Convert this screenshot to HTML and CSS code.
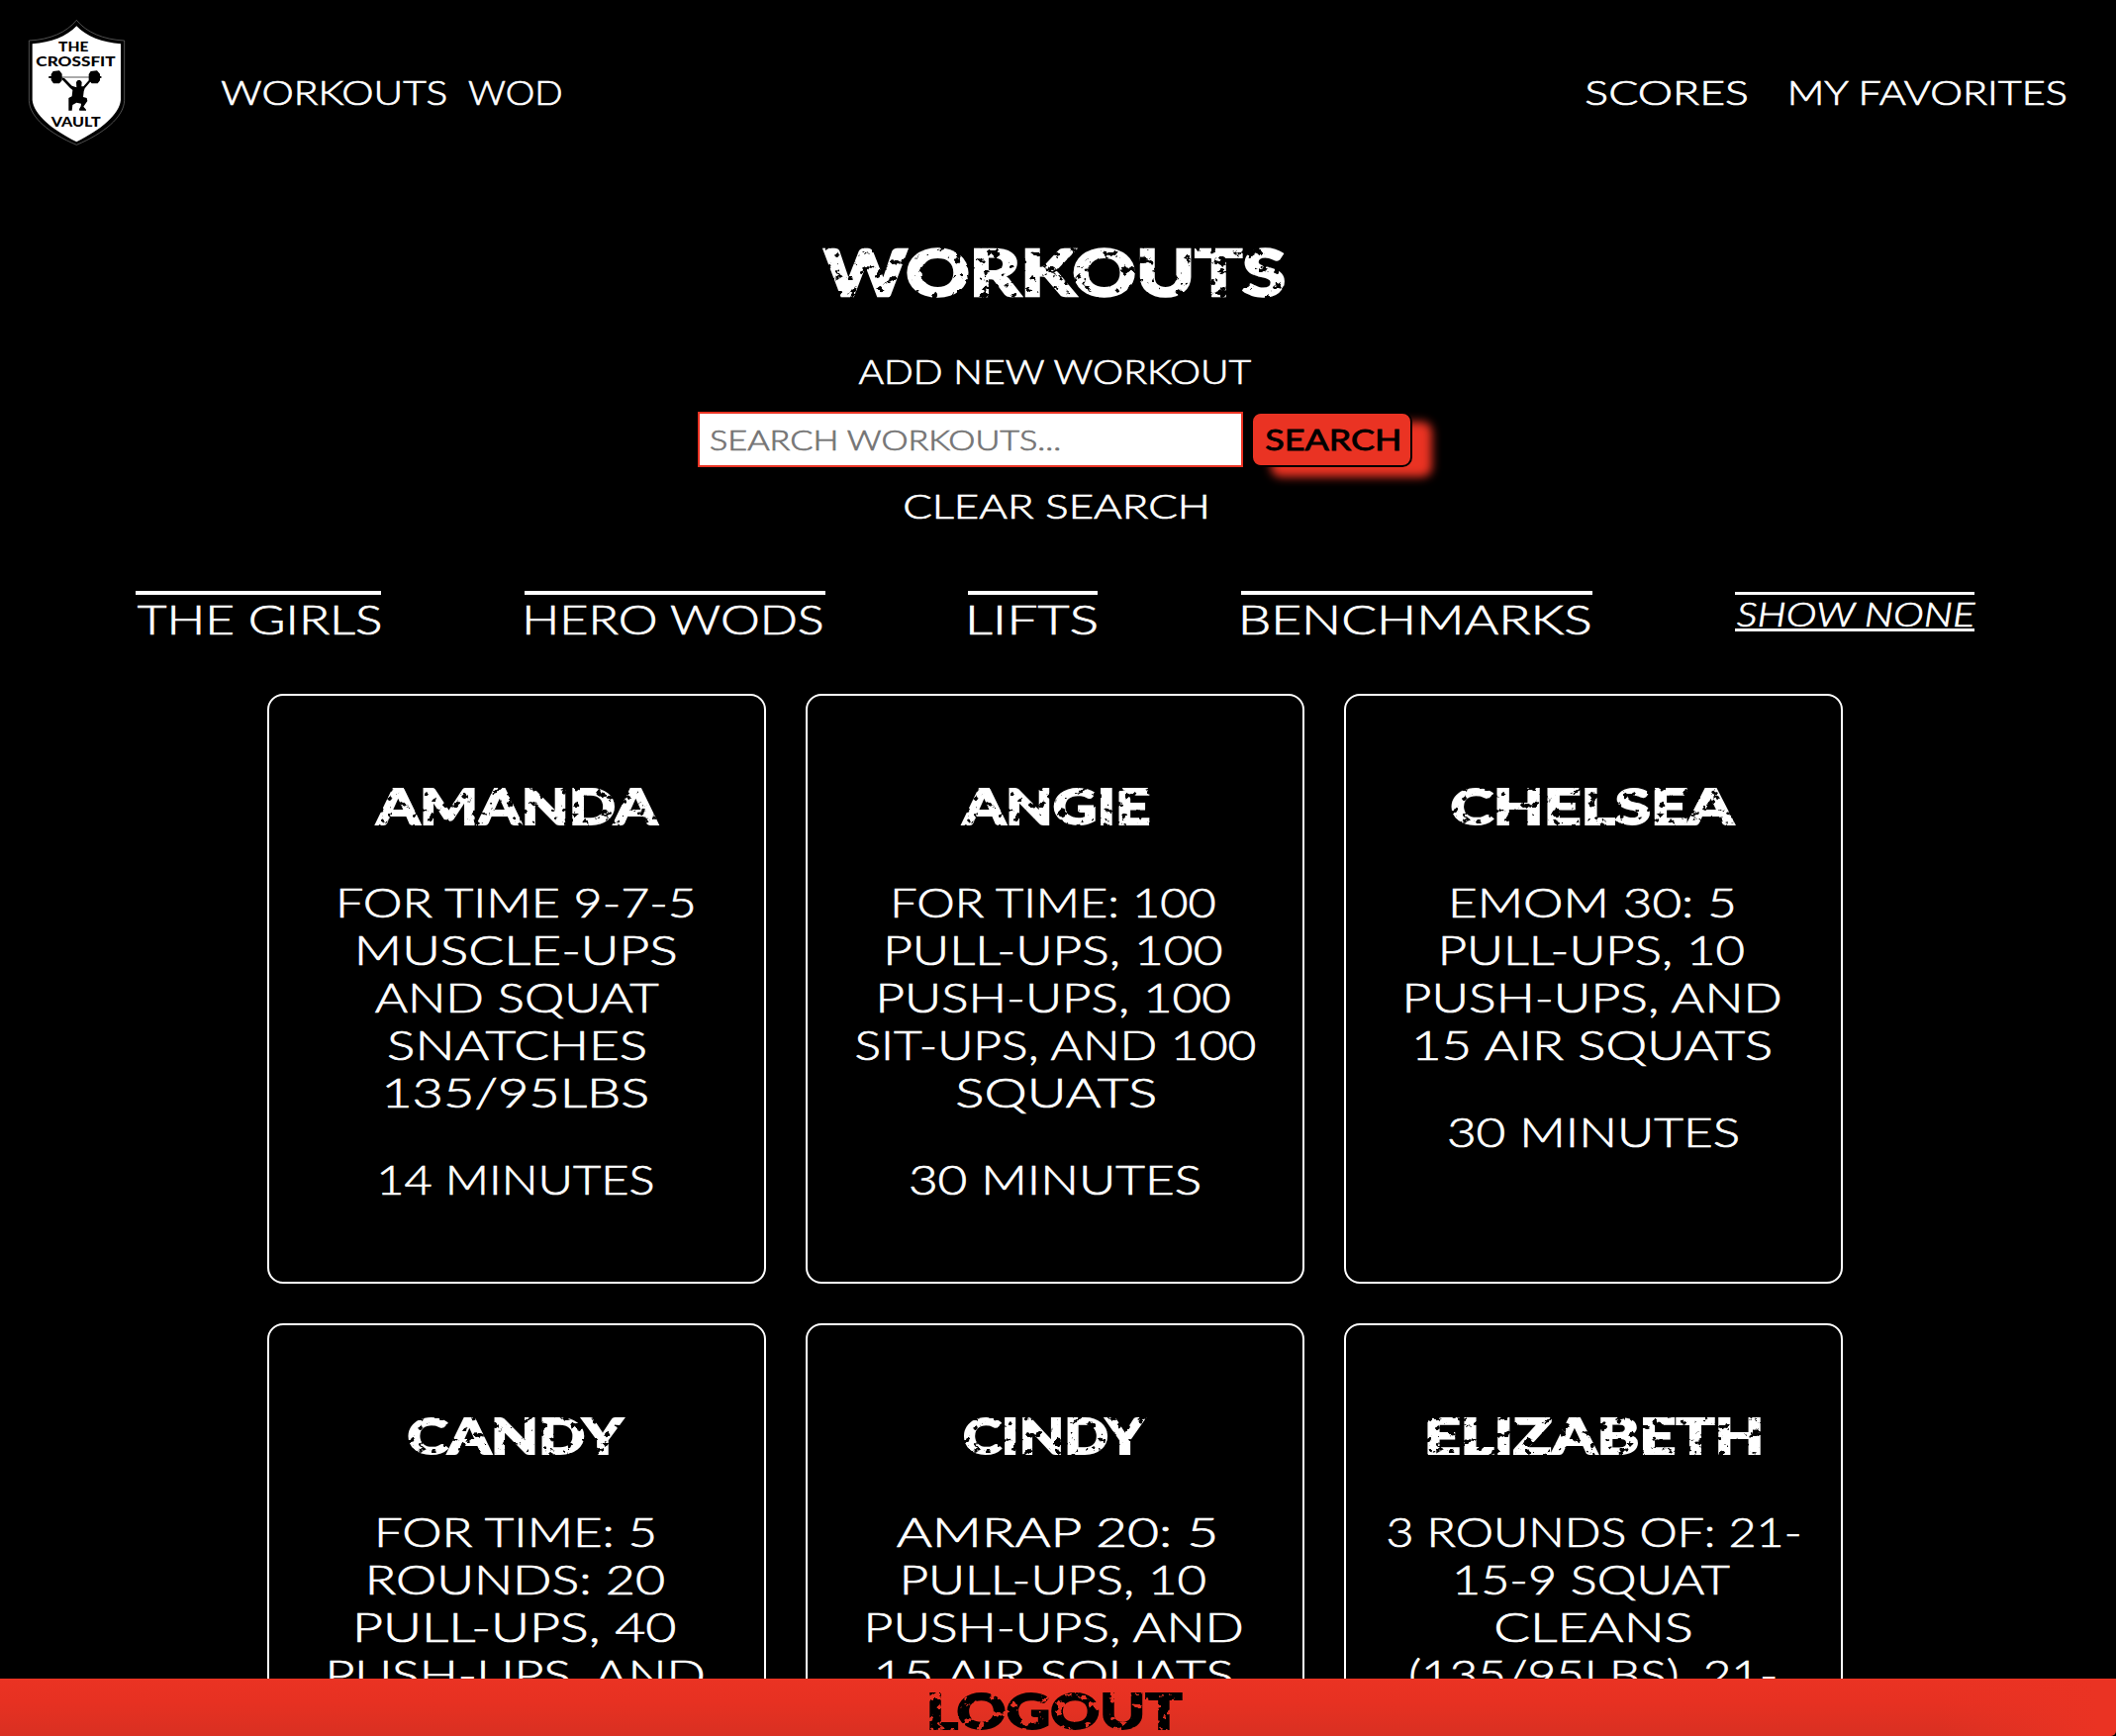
FILE: index.html
```html
<!DOCTYPE html>
<html lang="en">
<head>
<meta charset="utf-8">
<title>The Crossfit Vault</title>
<link rel="stylesheet" href="styles.css">
</head>
<body>
<svg class="defs" width="0" height="0" aria-hidden="true">
  <filter id="grit" x="-2%" y="0" width="104%" height="100%">
    <feTurbulence type="fractalNoise" baseFrequency="0.14 0.12" numOctaves="4" seed="11" result="n"/>
    <feColorMatrix in="n" type="matrix" values="0 0 0 0 0  0 0 0 0 0  0 0 0 0 0  -18 0 0 0 12" result="m"/>
    <feComposite in="SourceGraphic" in2="m" operator="in"/>
  </filter>
</svg>

<header class="topbar">
  <svg class="logo" viewBox="0 0 360 420">
    <path d="M172 31C142 68 92 90 28 93V275C30 325 90 375 172 409C254 375 315 325 317 275V93C253 90 202 68 172 31Z" fill="#000" stroke="#777" stroke-width="2"/>
    <path d="M172 49C142 80 95 99 38 103V273C42 317 98 363 172 400C246 363 302 317 306 273V103C250 99 202 80 172 49Z" fill="#fff"/>
    <g class="logo-text">
      <text x="117" y="126" textLength="91" lengthAdjust="spacingAndGlyphs">THE</text>
      <text x="49" y="171" textLength="241" lengthAdjust="spacingAndGlyphs">CROSSFIT</text>
      <text x="95" y="353" textLength="150" lengthAdjust="spacingAndGlyphs">VAULT</text>
    </g>
    <path d="M88 204H247" stroke="#000" stroke-width="2"/>
    <path d="M88 201H96V207H88ZM239 201H247V207H239Z"/>
    <path d="M101 186L120 184L128 194V214L120 223H102L95 213V195ZM215 186L234 184L243 194V214L236 223H218L209 213V195Z"/>
    <path d="M127 205L136 208L158 230L172 235L171 219L176 213H183L188 219L187 232L193 232L209 214L217 207L218 213L197 238L194 247L192 264L203 267L205 276L193 293L201 302V305H181L180 301L185 292L186 284L172 281L160 288L158 305H148V267L158 262L160 243L152 236L128 211Z"/>
  </svg>
  <nav class="nav nav-left">
    <a class="slot w-workouts"><span class="fit" data-w="228">WORKOUTS</span></a>
    <a class="slot w-wod"><span class="fit" data-w="94">WOD</span></a>
  </nav>
  <nav class="nav nav-right">
    <a class="slot w-scores"><span class="fit" data-w="163">SCORES</span></a>
    <a class="slot w-favorites"><span class="fit" data-w="280">MY FAVORITES</span></a>
  </nav>
</header>

<main class="page">
  <h1 class="heading"><span class="fit" data-w="465">WORKOUTS</span></h1>
  <a class="action"><span class="fit" data-w="398">ADD NEW WORKOUT</span></a>
  <form class="search">
    <div class="search-field"><span class="fit" data-w="353">SEARCH WORKOUTS...</span></div>
    <button class="search-button" type="button"><span class="fit" data-w="135">SEARCH</span></button>
  </form>
  <a class="action"><span class="fit" data-w="305">CLEAR SEARCH</span></a>

  <nav class="categories">
    <a class="category c-girls"><span class="fit" data-w="245">THE GIRLS</span></a>
    <a class="category c-hero"><span class="fit" data-w="299">HERO WODS</span></a>
    <a class="category c-lifts"><span class="fit" data-w="127">LIFTS</span></a>
    <a class="category c-bench"><span class="fit" data-w="350">BENCHMARKS</span></a>
    <a class="category c-none"><span class="fit" data-w="243">SHOW NONE</span></a>
  </nav>

  <section class="grid">
    <article class="card">
      <h2 class="card-title"><span class="fit" data-w="286">AMANDA</span></h2>
      <p class="card-text"><span class="fit" data-w="358">FOR TIME 9-7-5</span> <span class="fit" data-w="319">MUSCLE-UPS</span> <span class="fit" data-w="287">AND SQUAT</span> <span class="fit" data-w="259">SNATCHES</span> <span class="fit" data-w="263">135/95LBS</span></p>
      <p class="card-text"><span class="fit" data-w="274">14 MINUTES</span></p>
    </article>
    <article class="card">
      <h2 class="card-title"><span class="fit" data-w="189">ANGIE</span></h2>
      <p class="card-text"><span class="fit" data-w="325">FOR TIME: 100</span> <span class="fit" data-w="337">PULL-UPS, 100</span> <span class="fit" data-w="353">PUSH-UPS, 100</span> <span class="fit" data-w="405">SIT-UPS, AND 100</span> <span class="fit" data-w="200">SQUATS</span></p>
      <p class="card-text"><span class="fit" data-w="291">30 MINUTES</span></p>
    </article>
    <article class="card">
      <h2 class="card-title"><span class="fit" data-w="286">CHELSEA</span></h2>
      <p class="card-text"><span class="fit" data-w="283">EMOM 30: 5</span> <span class="fit" data-w="304">PULL-UPS, 10</span> <span class="fit" data-w="379">PUSH-UPS, AND</span> <span class="fit" data-w="359">15 AIR SQUATS</span></p>
      <p class="card-text"><span class="fit" data-w="291">30 MINUTES</span></p>
    </article>
    <article class="card">
      <h2 class="card-title"><span class="fit" data-w="218">CANDY</span></h2>
      <p class="card-text"><span class="fit" data-w="279">FOR TIME: 5</span> <span class="fit" data-w="297">ROUNDS: 20</span> <span class="fit" data-w="321">PULL-UPS, 40</span> <span class="fit" data-w="379">PUSH-UPS, AND</span></p>
    </article>
    <article class="card">
      <h2 class="card-title"><span class="fit" data-w="183">CINDY</span></h2>
      <p class="card-text"><span class="fit" data-w="323">AMRAP 20: 5</span> <span class="fit" data-w="304">PULL-UPS, 10</span> <span class="fit" data-w="379">PUSH-UPS, AND</span> <span class="fit" data-w="358">15 AIR SQUATS</span></p>
    </article>
    <article class="card">
      <h2 class="card-title"><span class="fit" data-w="335">ELIZABETH</span></h2>
      <p class="card-text"><span class="fit" data-w="415">3 ROUNDS OF: 21-</span> <span class="fit" data-w="276">15-9 SQUAT</span> <span class="fit" data-w="196">CLEANS</span> <span class="fit" data-w="368">(135/95LBS), 21-</span></p>
    </article>
  </section>
</main>

<footer class="logout"><span class="fit" data-w="255">LOGOUT</span></footer>
<script src="fit.js"></script>
</body>
</html>
```
FILE: styles.css
```css
* { box-sizing: border-box; }

html { background: #000; }

body {
  margin: 0;
  display: flex;
  flex-direction: column;
  height: 1754px;
  overflow: hidden;
  background: #000;
  color: #fff;
  font-family: Lato, "Open Sans", sans-serif;
  font-size: 33.5px;
  font-weight: 300;
  line-height: 40px;
  -webkit-text-stroke: 0.7px currentColor;
}

.defs { position: absolute; }

.fit {
  display: block;
  flex: none;
  width: max-content;
  white-space: nowrap;
}

.topbar {
  display: flex;
  flex: none;
  height: 235px;
  padding: 10px 49px 0 20px;
}

.logo { width: 120px; height: 140px; flex: none; }

.logo-text {
  font-family: Lato, sans-serif;
  font-weight: 900;
  font-size: 38px;
}

.nav { display: flex; padding-top: 63px; }
.nav-left { margin-left: 83px; gap: 22px; }
.nav-right { margin-left: auto; gap: 43px; }

.slot { display: flex; justify-content: center; height: 40px; }
.w-workouts { width: 228px; }
.w-wod { width: 94px; }
.w-scores { width: 163px; }
.w-favorites { width: 280px; }

.page {
  display: flex;
  flex: 1;
  min-height: 0;
  flex-direction: column;
  align-items: center;
  width: 2132px;
  overflow: hidden;
}

.page > * { flex: none; }

.heading {
  margin: 0 0 40px;
  font-size: 64px;
  font-weight: 900;
  line-height: 80px;
  padding-right: 2px;
  -webkit-text-stroke: 2.4px currentColor;
}

.heading .fit, .card-title .fit, .logout .fit { filter: url(#grit); }

.search {
  display: flex;
  gap: 8px;
  margin: 21px 0 19px;
  font-size: 28px;
}

.search-field {
  display: flex;
  align-items: center;
  justify-content: center;
  width: 551px;
  height: 56px;
  padding-right: 173px;
  border: 2px solid #ea3323;
  background: #fff;
  color: #757575;
}

.search-button {
  display: flex;
  align-items: center;
  justify-content: center;
  width: 163px;
  height: 56px;
  padding: 0;
  border: 2px solid #000;
  border-radius: 10px;
  background: #ea3323;
  box-shadow: 20px 10px 10px #ea3323;
  color: #000;
  font-family: inherit;
  font-size: 28px;
  font-weight: 400;
  -webkit-text-stroke: 0.8px currentColor;
}

.categories {
  display: flex;
  justify-content: space-between;
  align-items: flex-start;
  width: 1858px;
  height: 104px;
  margin-top: 66px;
  font-size: 41.5px;
  line-height: 48px;
}

.category {
  display: flex;
  justify-content: center;
  border-top: 4px solid #fff;
}

.c-girls { width: 248px; }
.c-hero { width: 304px; }
.c-lifts { width: 131px; }
.c-bench { width: 355px; }

.c-none {
  width: 242px;
  margin-top: 1px;
  padding: 4px 0 0 3px;
  border-width: 3px 0;
  border-style: solid;
  border-color: #fff;
  font-size: 33.5px;
  font-style: italic;
  line-height: 30px;
}

.grid {
  display: grid;
  grid-template-columns: repeat(3, 504px);
  grid-auto-rows: 596px;
  gap: 40px;
}

.card {
  display: flex;
  flex-direction: column;
  align-items: center;
  gap: 40px;
  padding-top: 81px;
  border: 2px solid #fff;
  border-radius: 16px;
  font-size: 41.5px;
  line-height: 48px;
}

.card-title {
  margin: 0 0 3px;
  font-size: 50px;
  font-weight: 900;
  line-height: 60px;
  -webkit-text-stroke: 1.8px currentColor;
}

.card-text {
  display: flex;
  flex-direction: column;
  align-items: center;
  margin: 0;
}

.logout {
  display: flex;
  flex: none;
  justify-content: center;
  height: 58px;
  padding: 6px 5px 0 0;
  border-bottom-right-radius: 5px;
  background:
    linear-gradient(90deg, rgba(234, 51, 35, 0) 1960px, #ea3323 2120px),
    linear-gradient(#ea3323 0%, #e73122 40%, #d93022 100%);
  color: #000;
  font-size: 50px;
  font-weight: 900;
  line-height: 52px;
  -webkit-text-stroke: 1.8px currentColor;
}
```
FILE: fit.js
```js
// Stretches each line of display type to its extended width.
const ctx = document.createElement('canvas').getContext('2d');
document.querySelectorAll('.fit').forEach((el) => {
  const s = getComputedStyle(el);
  ctx.font = `${s.fontStyle} ${s.fontWeight} ${s.fontSize} ${s.fontFamily}`;
  const m = ctx.measureText(el.textContent);
  const ink = m.actualBoundingBoxLeft + m.actualBoundingBoxRight;
  const k = el.dataset.w / ink;
  const middle = (m.actualBoundingBoxRight - m.actualBoundingBoxLeft) / 2;
  el.style.transform = `translateX(${(m.width / 2 - middle) * k}px) scaleX(${k})`;
});
```
